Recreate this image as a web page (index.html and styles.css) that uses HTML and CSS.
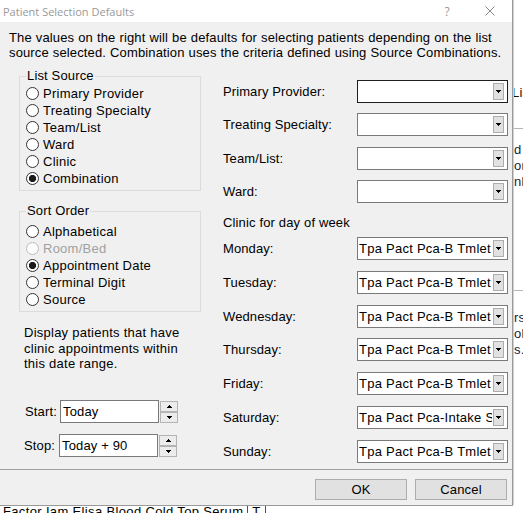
FILE: index.html
```html
<!DOCTYPE html>
<html>
<head>
<meta charset="utf-8">
<title>Patient Selection Defaults</title>
<link rel="stylesheet" href="styles.css">
</head>
<body>
<div class="desktop">
  <div class="bgwin">
    <div class="bg-tab">List</div>
    <div class="bg-rule bg-rule-1"></div>
    <div class="bg-text bg-text-1">d<br>or<br>nb</div>
    <div class="bg-rule bg-rule-2"></div>
    <div class="bg-text bg-text-2">rs<br>ol<br>s.</div>
  </div>
  <div class="bg-bottom">
    <span class="bg-cell bg-cell-wide">Factor Iam Elisa Blood Cold Top Serum</span><span class="bg-cell">T</span>
  </div>

  <div class="dialog">
    <div class="titlebar">
      <span class="title">Patient Selection Defaults</span>
      <span class="help">?</span>
      <svg class="close" width="10" height="10" viewBox="0 0 10 10"><path d="M0.5 0.5 L9.5 9.5 M9.5 0.5 L0.5 9.5" stroke="#8a8a8a" stroke-width="1" fill="none"/></svg>
    </div>
    <div class="dlg-body">
      <p class="intro">The values on the right will be defaults for selecting patients depending on the list<br>source selected. Combination uses the criteria defined using Source Combinations.</p>
      <div class="main">
        <div class="left">
          <fieldset class="group group-source">
            <legend>List Source</legend>
            <div class="radio"><span class="dot"></span>Primary Provider</div>
            <div class="radio"><span class="dot"></span>Treating Specialty</div>
            <div class="radio"><span class="dot"></span>Team/List</div>
            <div class="radio"><span class="dot"></span>Ward</div>
            <div class="radio"><span class="dot"></span>Clinic</div>
            <div class="radio"><span class="dot checked"></span>Combination</div>
          </fieldset>
          <fieldset class="group group-sort">
            <legend>Sort Order</legend>
            <div class="radio"><span class="dot"></span>Alphabetical</div>
            <div class="radio disabled"><span class="dot"></span>Room/Bed</div>
            <div class="radio"><span class="dot checked"></span>Appointment Date</div>
            <div class="radio"><span class="dot"></span>Terminal Digit</div>
            <div class="radio"><span class="dot"></span>Source</div>
          </fieldset>
          <p class="range-note">Display patients that have<br>clinic appointments within<br>this date range.</p>
          <div class="date-row date-start">
            <span class="date-label">Start:</span>
            <div class="textbox">Today</div>
            <div class="spin">
              <div class="spin-btn"><svg width="5" height="3" viewBox="0 0 5 3"><rect x="2" y="0" width="1" height="1"/><rect x="1" y="1" width="3" height="1"/><rect x="0" y="2" width="5" height="1"/></svg></div>
              <div class="spin-btn"><svg width="5" height="3" viewBox="0 0 5 3"><rect x="0" y="0" width="5" height="1"/><rect x="1" y="1" width="3" height="1"/><rect x="2" y="2" width="1" height="1"/></svg></div>
            </div>
          </div>
          <div class="date-row date-stop">
            <span class="date-label">Stop:</span>
            <div class="textbox">Today + 90</div>
            <div class="spin">
              <div class="spin-btn"><svg width="5" height="3" viewBox="0 0 5 3"><rect x="2" y="0" width="1" height="1"/><rect x="1" y="1" width="3" height="1"/><rect x="0" y="2" width="5" height="1"/></svg></div>
              <div class="spin-btn"><svg width="5" height="3" viewBox="0 0 5 3"><rect x="0" y="0" width="5" height="1"/><rect x="1" y="1" width="3" height="1"/><rect x="2" y="2" width="1" height="1"/></svg></div>
            </div>
          </div>
        </div>

        <div class="right">
          <div class="fields fields-top">
            <span class="flabel">Primary Provider:</span>
            <div class="combo focused"><span class="ctext"></span><span class="cbtn"><svg width="5" height="3" viewBox="0 0 5 3"><rect x="0" y="0" width="5" height="1"/><rect x="1" y="1" width="3" height="1"/><rect x="2" y="2" width="1" height="1"/></svg></span></div>
            <span class="flabel">Treating Specialty:</span>
            <div class="combo"><span class="ctext"></span><span class="cbtn"><svg width="5" height="3" viewBox="0 0 5 3"><rect x="0" y="0" width="5" height="1"/><rect x="1" y="1" width="3" height="1"/><rect x="2" y="2" width="1" height="1"/></svg></span></div>
            <span class="flabel">Team/List:</span>
            <div class="combo"><span class="ctext"></span><span class="cbtn"><svg width="5" height="3" viewBox="0 0 5 3"><rect x="0" y="0" width="5" height="1"/><rect x="1" y="1" width="3" height="1"/><rect x="2" y="2" width="1" height="1"/></svg></span></div>
            <span class="flabel">Ward:</span>
            <div class="combo"><span class="ctext"></span><span class="cbtn"><svg width="5" height="3" viewBox="0 0 5 3"><rect x="0" y="0" width="5" height="1"/><rect x="1" y="1" width="3" height="1"/><rect x="2" y="2" width="1" height="1"/></svg></span></div>
          </div>
          <div class="clinic-label">Clinic for day of week</div>
          <div class="fields fields-days">
            <span class="flabel">Monday:</span>
            <div class="combo"><span class="ctext">Tpa Pact Pca-B Tmlet</span><span class="cbtn"><svg width="5" height="3" viewBox="0 0 5 3"><rect x="0" y="0" width="5" height="1"/><rect x="1" y="1" width="3" height="1"/><rect x="2" y="2" width="1" height="1"/></svg></span></div>
            <span class="flabel">Tuesday:</span>
            <div class="combo"><span class="ctext">Tpa Pact Pca-B Tmlet</span><span class="cbtn"><svg width="5" height="3" viewBox="0 0 5 3"><rect x="0" y="0" width="5" height="1"/><rect x="1" y="1" width="3" height="1"/><rect x="2" y="2" width="1" height="1"/></svg></span></div>
            <span class="flabel">Wednesday:</span>
            <div class="combo"><span class="ctext">Tpa Pact Pca-B Tmlet</span><span class="cbtn"><svg width="5" height="3" viewBox="0 0 5 3"><rect x="0" y="0" width="5" height="1"/><rect x="1" y="1" width="3" height="1"/><rect x="2" y="2" width="1" height="1"/></svg></span></div>
            <span class="flabel">Thursday:</span>
            <div class="combo"><span class="ctext">Tpa Pact Pca-B Tmlet</span><span class="cbtn"><svg width="5" height="3" viewBox="0 0 5 3"><rect x="0" y="0" width="5" height="1"/><rect x="1" y="1" width="3" height="1"/><rect x="2" y="2" width="1" height="1"/></svg></span></div>
            <span class="flabel">Friday:</span>
            <div class="combo"><span class="ctext">Tpa Pact Pca-B Tmlet</span><span class="cbtn"><svg width="5" height="3" viewBox="0 0 5 3"><rect x="0" y="0" width="5" height="1"/><rect x="1" y="1" width="3" height="1"/><rect x="2" y="2" width="1" height="1"/></svg></span></div>
            <span class="flabel">Saturday:</span>
            <div class="combo"><span class="ctext">Tpa Pact Pca-Intake Screen</span><span class="cbtn"><svg width="5" height="3" viewBox="0 0 5 3"><rect x="0" y="0" width="5" height="1"/><rect x="1" y="1" width="3" height="1"/><rect x="2" y="2" width="1" height="1"/></svg></span></div>
            <span class="flabel">Sunday:</span>
            <div class="combo"><span class="ctext">Tpa Pact Pca-B Tmlet</span><span class="cbtn"><svg width="5" height="3" viewBox="0 0 5 3"><rect x="0" y="0" width="5" height="1"/><rect x="1" y="1" width="3" height="1"/><rect x="2" y="2" width="1" height="1"/></svg></span></div>
          </div>
        </div>
      </div>
      <div class="buttons">
        <div class="btn">OK</div>
        <div class="btn">Cancel</div>
      </div>
    </div>
  </div>
</div>
</body>
</html>
```

FILE: styles.css
```css
* { box-sizing: border-box; }
html, body { margin: 0; padding: 0; }
body {
  width: 523px;
  height: 513px;
  overflow: hidden;
  background: #fff;
  font-family: "Liberation Sans", Arial, sans-serif;
  font-size: 13px;
  letter-spacing: 0.15px;
  color: #000;
}
.desktop {
  position: relative;
  width: 523px;
  height: 513px;
  overflow: hidden;
  background: #fff;
}

/* background window fragments (only the strip right of the dialog shows) */
.bgwin {
  position: absolute;
  left: 513px;
  top: 0;
  width: 10px;
  height: 505px;
  overflow: hidden;
  background: #fff;
  border-left: 1px solid #d0d0d0;
  z-index: 0;
}
.bg-tab {
  position: absolute;
  left: -2px;
  top: 85px;
  line-height: 16px;
  color: #111;
  white-space: nowrap;
}
.bg-rule {
  position: absolute;
  left: 0;
  right: 0;
  height: 1px;
  background: #b5b5b5;
}
.bg-rule-1 { top: 128px; }
.bg-rule-2 { top: 290px; }
.bg-text {
  position: absolute;
  left: 0;
  line-height: 16px;
  color: #1c1c3a;
  white-space: nowrap;
}
.bg-text-1 { top: 142px; }
.bg-text-2 { top: 310px; }
.bg-bottom {
  position: absolute;
  left: 0;
  top: 506px;
  height: 7px;
  overflow: hidden;
  display: flex;
  line-height: 15px;
  z-index: 1;
  letter-spacing: 0.35px;
}
.bg-bottom .bg-cell { margin-top: -2px; }
.bg-cell {
  padding: 0 4px;
  border-right: 1px solid #555;
}
.bg-cell-wide { padding-left: 3px; }

/* dialog */
.dialog {
  position: absolute;
  left: 0;
  top: 0;
  width: 513px;
  height: 506px;
  background: #f0f0f0;
  border-right: 1px solid #9a9a9a;
  border-bottom: 1px solid #9a9a9a;
  z-index: 2;
  display: flex;
  flex-direction: column;
}
.titlebar {
  height: 22px;
  flex: none;
  background: #fff;
  display: flex;
  align-items: center;
  padding-left: 3px;
  padding-right: 17px;
  color: #999;
  font-family: "Open Sans", "Noto Sans", sans-serif;
  font-size: 11px;
  letter-spacing: 0;
}
.title { flex: 1; white-space: nowrap; }
.help { width: 10px; text-align: center; margin-right: 33px; font-size: 12px; }
.close { display: block; flex: none; }

.dlg-body { flex: 1; display: flex; flex-direction: column; }
.intro {
  margin: 8px 0 0 9px;
  line-height: 15px;
  white-space: nowrap;
  letter-spacing: 0.13px;
  word-spacing: 0.3px;
}
.main {
  display: flex;
  margin-top: 8px;
}
.left {
  width: 182px;
  margin-left: 19px;
}
.group {
  margin: 0;
  width: 182px;
  min-width: 0;
  border: 1px solid #dcdcdc;
  padding: 1px 0 3px 6px;
}
.group legend {
  padding: 0 1px;
  line-height: 16px;
}
.group-sort {
  margin-top: 12px;
  padding-top: 4px;
}
.radio {
  display: flex;
  align-items: center;
  height: 17px;
  white-space: nowrap;
  letter-spacing: 0.25px;
}
.dot {
  width: 13px;
  height: 13px;
  flex: none;
  border-radius: 50%;
  border: 1px solid #333;
  background: #fff;
  margin-right: 4px;
}
.dot.checked {
  background: radial-gradient(circle at center, #1a1a1a 0 3.3px, #fff 3.9px);
}
.radio.disabled { color: #a0a0a0; }
.radio.disabled .dot { border-color: #bcbcbc; background: #fcfcfc; }

.range-note {
  margin: 13px 0 0 5px;
  line-height: 15.5px;
  letter-spacing: 0.25px;
}
.date-row {
  display: flex;
  align-items: flex-start;
  height: 23px;
  padding-left: 5px;
}
.date-start { margin-top: 28px; }
.date-stop { margin-top: 11px; }
.date-label {
  width: 36px;
  line-height: 23px;
}
.date-start .date-label { padding-left: 1px; }
.date-stop .date-label { width: 35px; }
.textbox {
  width: 99px;
  height: 23px;
  border: 1px solid #7a7a7a;
  background: #fff;
  padding-left: 2px;
  line-height: 21px;
  white-space: nowrap;
}
.spin {
  margin-left: 1px;
  margin-top: 1px;
  width: 18px;
  display: flex;
  flex-direction: column;
}
.spin-btn {
  height: 11px;
  border: 1px solid #b4b4b4;
  background: #ececec;
  display: flex;
  align-items: center;
  justify-content: center;
}
.spin-btn svg { display: block; fill: #000; }

.right {
  margin-left: 22px;
  width: 285px;
  padding-top: 12px;
}
.fields {
  display: grid;
  grid-template-columns: 134px 151px;
  align-items: center;
}
.fields-top { row-gap: 10.33px; }
.fields-days { row-gap: 10.83px; }
.flabel {
  white-space: nowrap;
  letter-spacing: 0.1px;
}
.clinic-label {
  margin-top: 12.5px;
  margin-bottom: 6.5px;
  line-height: 15px;
}
.combo {
  height: 23px;
  border: 1px solid #7a7a7a;
  background: #fff;
  display: flex;
  align-items: center;
}
.combo.focused { border-color: #1e1e1e; }
.ctext {
  flex: 1;
  min-width: 0;
  overflow: hidden;
  white-space: nowrap;
  padding-left: 1px;
  letter-spacing: 0.25px;
}
.cbtn {
  flex: none;
  width: 11px;
  height: 17px;
  margin-left: 1px;
  margin-right: 3px;
  background: #e1e1e1;
  border: 1px solid #adadad;
  display: flex;
  align-items: center;
  justify-content: center;
}
.cbtn svg { display: block; fill: #000; }

.buttons {
  margin-top: 6px;
  border-top: 1px solid #a0a0a0;
  padding: 9px 5px 0 0;
  display: flex;
  justify-content: flex-end;
  gap: 8px;
}
.btn {
  width: 92px;
  height: 21px;
  background: #e1e1e1;
  border: 1px solid #adadad;
  display: flex;
  align-items: center;
  justify-content: center;
}
```
